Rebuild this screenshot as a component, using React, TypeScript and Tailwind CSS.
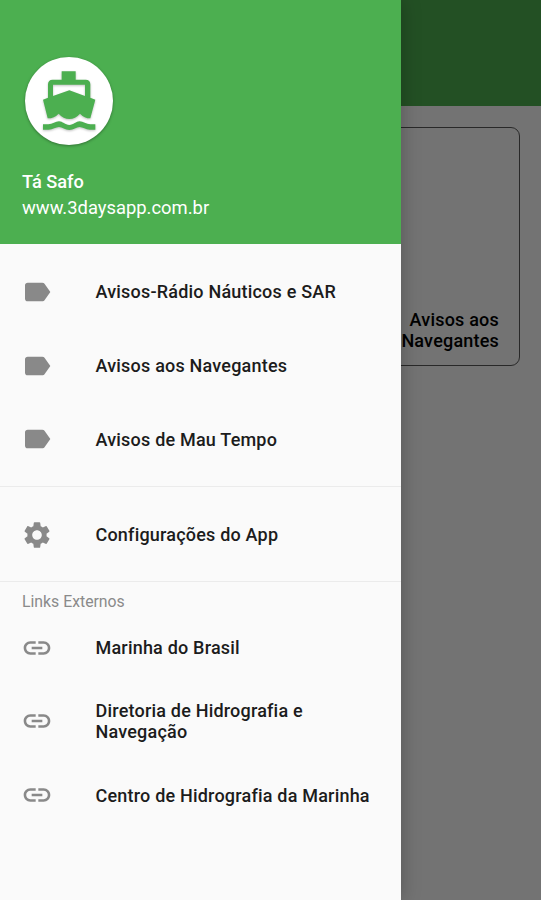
import React from 'react';
import { MdLabel, MdLink, MdSettings } from 'react-icons/md';
import type { IconType } from 'react-icons';

const notices = ['Avisos-Rádio Náuticos e SAR', 'Avisos aos Navegantes', 'Avisos de Mau Tempo'];
const links = ['Marinha do Brasil', 'Diretoria de Hidrografia e Navegação', 'Centro de Hidrografia da Marinha'];

const BoatIcon: React.FC<{ className?: string }> = ({ className }) => (
  <svg viewBox="0 0 198 222" fill="currentColor" className={className} aria-hidden="true">
    {/* Cabin and hull */}
    <path
      fillRule="evenodd"
      d="M77 22H119V47H149Q163 47 163 61V101L178 107L163 163Q145 163 132 149Q118 165 100 165Q82 165 68 149Q55 163 35 163L21 107L36 101V61Q36 47 50 47H77V22ZM51 62V96L100 79L147 96V62H51Z"
    />
    {/* Waves */}
    <path d="M21 181H37C49 181 59 172 69 172C80 172 87 183 100 183C113 183 120 172 131 172C141 172 151 181 163 181H178V197H161C149 197 140 189 131 189C121 189 113 198 100 198C87 198 79 189 69 189C60 189 50 197 38 197H21V181Z" />
  </svg>
);

const DrawerItem: React.FC<{ icon: IconType; label: string }> = ({ icon: Icon, label }) => (
  <li>
    <button className="flex h-[73.8px] w-full items-center pl-[21px] pr-5 text-left">
      <Icon className="h-8 w-8 shrink-0 text-[#898989]" />
      <span className="ml-[42.5px] text-[18px] leading-[21px] font-medium tracking-[0.2px] text-[#1c1c1c]">{label}</span>
    </button>
  </li>
);

const App: React.FC = () => {
  return (
    <div className="relative h-[900px] w-[541px] overflow-hidden bg-[#fafafa] font-['Roboto',sans-serif]">
      {/* Page behind the drawer */}
      <header className="h-[106px] bg-[#4caf50]" />
      <main className="px-[21px] pt-[21px]">
        <div className="flex h-[239px] items-end justify-end rounded-[9px] border border-[#5a5a5a] pr-[20px] pb-[14px]">
          <p className="w-[110px] text-right text-[18px] leading-[21px] font-medium tracking-[0.2px] text-black">
            Avisos aos Navegantes
          </p>
        </div>
      </main>

      <div className="absolute inset-0 bg-black/54" />

      {/* Drawer */}
      <aside className="absolute inset-y-0 left-0 w-[401px] bg-[#fafafa] shadow-[0_0_18px_rgba(0,0,0,0.25)]">
        <div className="flex h-[244px] flex-col bg-[#4caf50] pt-[57px] pl-[22px] text-white">
          <div className="ml-[3px] flex h-[88px] w-[88px] items-center justify-center rounded-full bg-white shadow-[0_1px_3px_rgba(0,0,0,0.35)]">
            <BoatIcon className="h-[74px] w-[66px] text-[#4caf50] drop-shadow-[0_1px_1px_rgba(0,0,0,0.25)]" />
          </div>
          <p className="mt-[26px] text-[18.2px] leading-[21px] font-medium">Tá Safo</p>
          <p className="mt-[5px] text-[18.4px] leading-[21px]">www.3daysapp.com.br</p>
        </div>

        <ul className="pt-[11px] pb-[9.6px]">
          {notices.map((label) => (
            <DrawerItem key={label} icon={MdLabel} label={label} />
          ))}
        </ul>
        <ul className="border-t border-[#ebebeb] pt-[10.7px] pb-[9.7px]">
          <DrawerItem icon={MdSettings} label="Configurações do App" />
        </ul>
        <section className="border-t border-[#ebebeb] pt-[10.8px]">
          <h2 className="pl-[22px] text-[15.8px] leading-[18px] text-[#8a8a8a]">Links Externos</h2>
          <ul className="-mt-[0.2px]">
            {links.map((label) => (
              <DrawerItem key={label} icon={MdLink} label={label} />
            ))}
          </ul>
        </section>
      </aside>
    </div>
  );
};

export default App;
